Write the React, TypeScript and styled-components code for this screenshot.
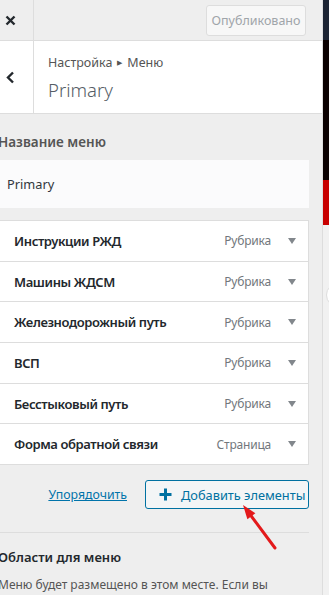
import React from "react";
import styled, { createGlobalStyle } from "styled-components";

const GlobalStyle = createGlobalStyle`
  html, body {
    margin: 0;
    padding: 0;
    background: #eee;
    font-family: "Noto Sans", "Open Sans", sans-serif;
    -webkit-font-smoothing: antialiased;
  }
  * { box-sizing: border-box; }
`;

const Page = styled.div`
  display: flex;
  width: 329px;
  height: 595px;
  overflow: hidden;
  position: relative;
`;

const Panel = styled.div`
  width: 323px;
  flex-shrink: 0;
  background: #eee;
  border-right: 1px solid #ddd;
  display: flex;
  flex-direction: column;
  & > * {
    flex-shrink: 0;
  }
`;

const Header = styled.div`
  height: 41px;
  display: flex;
  align-items: center;
  border-bottom: 1px solid #ddd;
  background: #eee;
`;

const CloseBtn = styled.div`
  width: 34px;
  height: 40px;
  border-right: 1px solid #ddd;
  display: flex;
  align-items: center;
  justify-content: center;
  padding-right: 12px;
`;

const Published = styled.div`
  margin-left: auto;
  margin-right: 16px;
  width: 100px;
  height: 31px;
  border: 1px solid #ddd;
  border-radius: 3px;
  background: #f7f7f7;
  color: #a0a5aa;
  font-size: 12.5px;
  display: flex;
  align-items: center;
  justify-content: center;
`;

const SectionHead = styled.div`
  height: 73px;
  display: flex;
  background: #fff;
  border-bottom: 1px solid #ddd;
`;

const BackBtn = styled.div`
  width: 34px;
  border-right: 1px solid #ddd;
  display: flex;
  align-items: center;
  justify-content: center;
  padding-right: 12px;
`;

const Titles = styled.div`
  padding: 12px 0 0 14px;
  display: flex;
  flex-direction: column;
`;

const Crumbs = styled.div`
  font-size: 12.5px;
  color: #555;
  line-height: 20px;
  display: flex;
  align-items: center;
  gap: 5px;
`;

const Tri = styled.span`
  font-size: 7px;
  color: #555;
`;

const Title = styled.div`
  font-size: 18.5px;
  font-weight: 300;
  color: #555d66;
  line-height: 30px;
  margin-top: 2px;
`;

const Body = styled.div`
  padding: 18px 13px 0 0;
  margin-left: -2px;
  display: flex;
  flex-direction: column;
`;

const Label = styled.div`
  font-size: 13.5px;
  font-weight: 600;
  color: #555;
  line-height: 20px;
`;

const NameInput = styled.div`
  margin-top: 8px;
  height: 48px;
  background: #fbfbfc;
  display: flex;
  align-items: center;
  padding-left: 9px;
  font-size: 12.8px;
  color: #32373c;
`;

const List = styled.div`
  margin-top: 12px;
  border: 1px solid #ddd;
  border-left: none;
  background: #fff;
`;

const Item = styled.div<{ last?: boolean }>`
  height: ${(p) => (p.last ? "39.8px" : "40.7px")};
  display: flex;
  align-items: center;
  padding: 0 12px 0 16px;
  border-bottom: ${(p) => (p.last ? "none" : "1px solid #ddd")};
`;

const ItemTitle = styled.div`
  font-size: 13px;
  letter-spacing: -0.4px;
  font-weight: 600;
  color: #23282d;
  flex: 1;
`;

const ItemType = styled.div`
  font-size: 12px;
  letter-spacing: -0.2px;
  color: #72777c;
  margin-right: 17px;
`;

const Caret = styled.svg`
  width: 8px;
  height: 6px;
  display: block;
`;

const Actions = styled.div`
  display: flex;
  align-items: center;
  justify-content: flex-end;
  gap: 18px;
  margin-top: 15px;
`;

const Link = styled.a`
  font-size: 12.3px;
  color: #0073aa;
  text-decoration: underline;
`;

const AddBtn = styled.div`
  width: 164px;
  height: 29px;
  border: 1px solid #0071a1;
  border-radius: 3px;
  background: #f3f5f6;
  color: #0071a1;
  font-size: 12.8px;
  display: flex;
  align-items: center;
  padding-left: 13px;
  gap: 9px;
`;

const Divider = styled.div`
  height: 1px;
  background: #ddd;
  margin-top: 23px;
`;

const AreaTitle = styled.div`
  font-size: 13px;
  font-weight: 600;
  color: #23282d;
  margin-top: 14px;
  line-height: 20px;
`;

const AreaText = styled.div`
  font-size: 12px;
  color: #555;
  margin-top: 8px;
  line-height: 20px;
  white-space: nowrap;
`;

const Preview = styled.div`
  flex: 1;
  display: flex;
  flex-direction: column;
  background: #f1f1f1;
  position: relative;
`;

const Band = styled.div<{ h: number; c: string }>`
  height: ${(p) => p.h}px;
  background: ${(p) => p.c};
`;

const Bubble = styled.div`
  position: absolute;
  left: 3px;
  top: 283px;
  width: 24px;
  height: 24px;
  border-radius: 50%;
  background: #fff;
  border: 1px solid #ddd;
`;

const Annotation = styled.svg`
  position: absolute;
  left: 230px;
  top: 500px;
  width: 60px;
  height: 60px;
  pointer-events: none;
`;

const items = [
  { title: "Инструкции РЖД", type: "Рубрика" },
  { title: "Машины ЖДСМ", type: "Рубрика" },
  { title: "Железнодорожный путь", type: "Рубрика" },
  { title: "ВСП", type: "Рубрика" },
  { title: "Бесстыковый путь", type: "Рубрика" },
  { title: "Форма обратной связи", type: "Страница" },
];

const App = () => {
  return (
    <Page>
      <GlobalStyle />
      <Panel>
        <Header>
          <CloseBtn>
            <svg width="11" height="11" viewBox="0 0 11 11">
              <path d="M1.5 1.5 L9.5 9.5 M9.5 1.5 L1.5 9.5" stroke="#23282d" strokeWidth="2.4" />
            </svg>
          </CloseBtn>
          <Published>Опубликовано</Published>
        </Header>
        <SectionHead>
          <BackBtn>
            <svg width="9" height="13" viewBox="0 0 9 13">
              <path d="M7 1.5 L2 6.5 L7 11.5" fill="none" stroke="#23282d" strokeWidth="2.4" />
            </svg>
          </BackBtn>
          <Titles>
            <Crumbs>
              Настройка <Tri>▶</Tri> Меню
            </Crumbs>
            <Title>Primary</Title>
          </Titles>
        </SectionHead>
        <Body>
          <Label>Название меню</Label>
          <NameInput>Primary</NameInput>
          <List>
            {items.map((it, i) => (
              <Item key={it.title} last={i === items.length - 1}>
                <ItemTitle>{it.title}</ItemTitle>
                <ItemType>{it.type}</ItemType>
                <Caret viewBox="0 0 8 6">
                  <path d="M0 0 H8 L4 6 Z" fill="#82878c" />
                </Caret>
              </Item>
            ))}
          </List>
          <Actions>
            <Link>Упорядочить</Link>
            <AddBtn>
              <svg width="13" height="13" viewBox="0 0 13 13">
                <path d="M6.5 0.5 V12.5 M0.5 6.5 H12.5" stroke="#0071a1" strokeWidth="3" />
              </svg>
              Добавить элементы
            </AddBtn>
          </Actions>
          <Divider />
          <AreaTitle>Области для меню</AreaTitle>
          <AreaText>Меню будет размещено в этом месте. Если вы</AreaText>
        </Body>
      </Panel>
      <Preview>
        <Band h={40} c="#1c2433" />
        <Band h={140} c="#0b0101" />
        <Band h={45} c="#c80000" />
        <Bubble />
      </Preview>
      <Annotation viewBox="0 0 60 60">
        <path d="M19 13 L45 48" stroke="#e3191b" strokeWidth="3" strokeLinecap="round" />
        <path d="M13 5 L17.4 19.2 L25.4 13.2 Z" fill="#e3191b" />
      </Annotation>
    </Page>
  );
};

export default App;
